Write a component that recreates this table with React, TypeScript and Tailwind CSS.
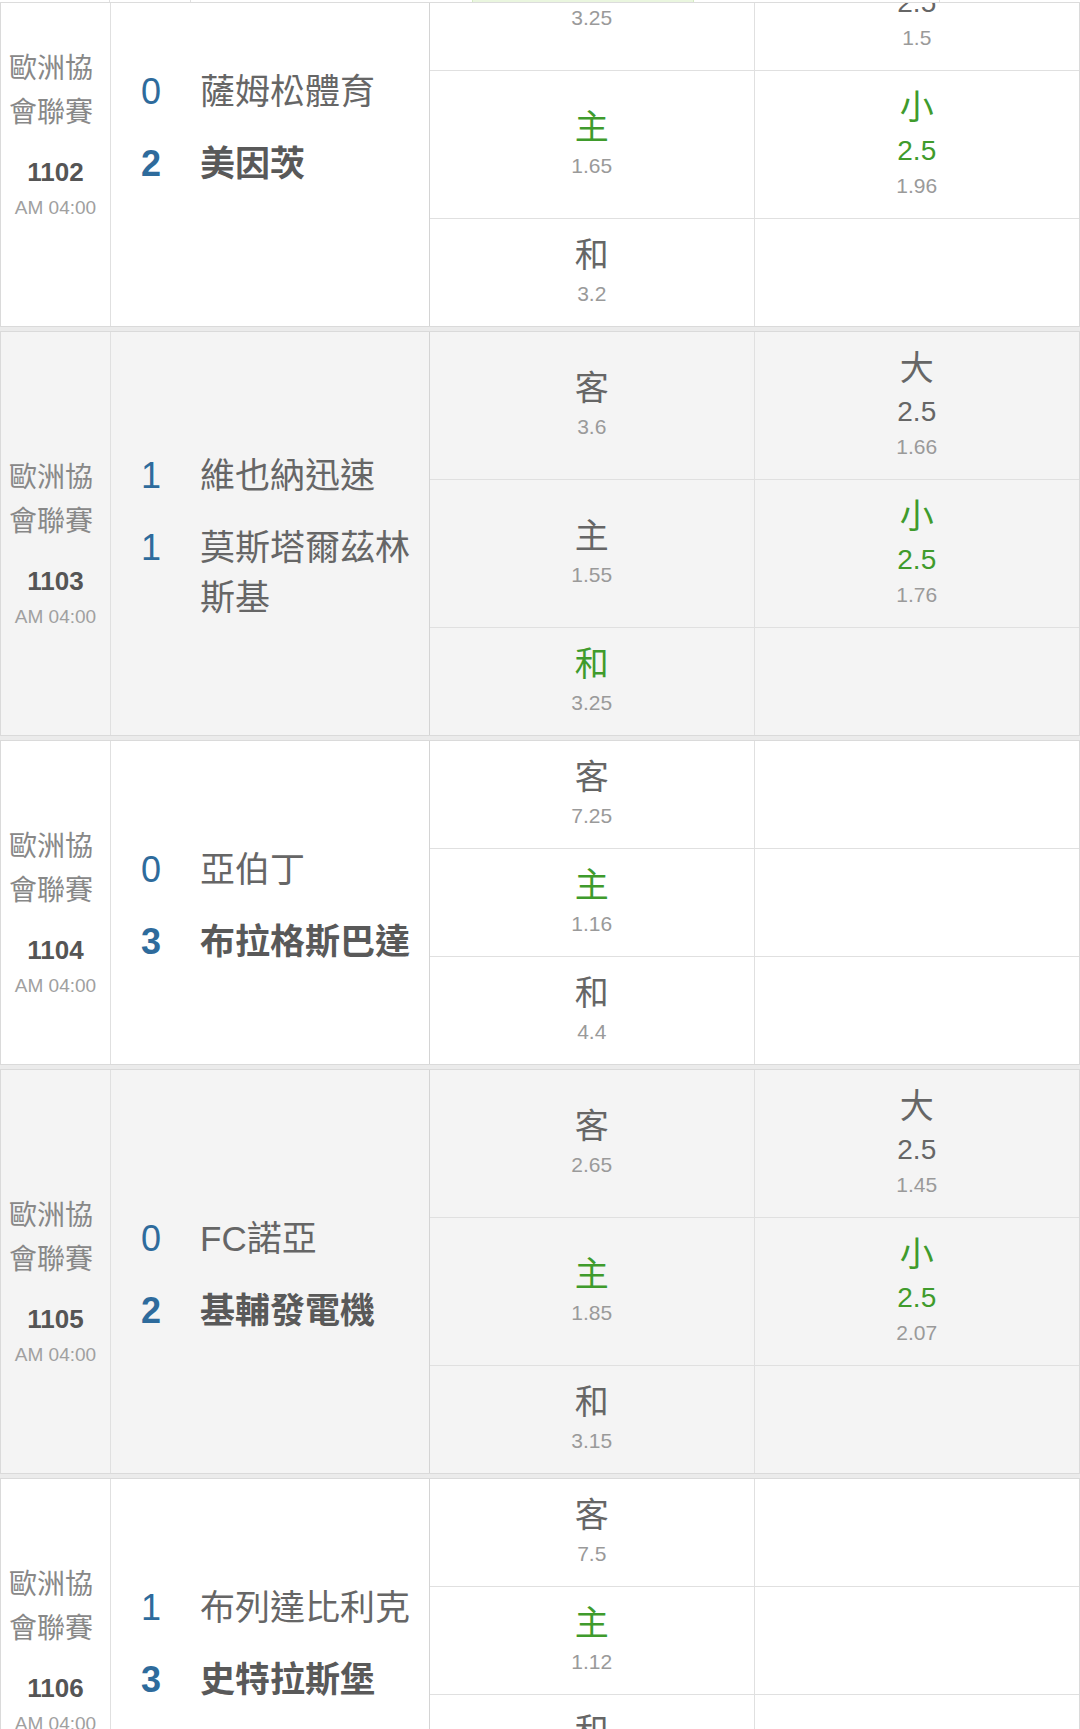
import React from 'react';

type Pick = { label: string; odds: string; win?: boolean };
type Total = { label: string; line: string; odds: string; win?: boolean } | null;
type Team = { score: number; name: string; win?: boolean };
type Match = { no: string; teams: Team[]; rows: [Pick, Total][] };

const matches: Match[] = [
  {
    no: '1102',
    teams: [
      { score: 0, name: '薩姆松體育' },
      { score: 2, name: '美因茨', win: true },
    ],
    rows: [
      [{ label: '客', odds: '3.25' }, { label: '大', line: '2.5', odds: '1.5' }],
      [{ label: '主', odds: '1.65', win: true }, { label: '小', line: '2.5', odds: '1.96', win: true }],
      [{ label: '和', odds: '3.2' }, null],
    ],
  },
  {
    no: '1103',
    teams: [
      { score: 1, name: '維也納迅速' },
      { score: 1, name: '莫斯塔爾茲林斯基' },
    ],
    rows: [
      [{ label: '客', odds: '3.6' }, { label: '大', line: '2.5', odds: '1.66' }],
      [{ label: '主', odds: '1.55' }, { label: '小', line: '2.5', odds: '1.76', win: true }],
      [{ label: '和', odds: '3.25', win: true }, null],
    ],
  },
  {
    no: '1104',
    teams: [
      { score: 0, name: '亞伯丁' },
      { score: 3, name: '布拉格斯巴達', win: true },
    ],
    rows: [
      [{ label: '客', odds: '7.25' }, null],
      [{ label: '主', odds: '1.16', win: true }, null],
      [{ label: '和', odds: '4.4' }, null],
    ],
  },
  {
    no: '1105',
    teams: [
      { score: 0, name: 'FC諾亞' },
      { score: 2, name: '基輔發電機', win: true },
    ],
    rows: [
      [{ label: '客', odds: '2.65' }, { label: '大', line: '2.5', odds: '1.45' }],
      [{ label: '主', odds: '1.85', win: true }, { label: '小', line: '2.5', odds: '2.07', win: true }],
      [{ label: '和', odds: '3.15' }, null],
    ],
  },
  {
    no: '1106',
    teams: [
      { score: 1, name: '布列達比利克' },
      { score: 3, name: '史特拉斯堡', win: true },
    ],
    rows: [
      [{ label: '客', odds: '7.5' }, null],
      [{ label: '主', odds: '1.12', win: true }, null],
      [{ label: '和', odds: '5.25' }, null],
    ],
  },
];

const font = { fontFamily: '"Liberation Sans", "Noto Sans CJK TC", sans-serif' };

function PickCell({ pick }: { pick: Pick }) {
  return (
    <div className="flex flex-col items-center justify-center pt-[12px] pb-[17px] border-r border-[#e0e0e0]">
      <div className={`text-[34px] leading-[48px] ${pick.win ? 'text-[#3f9b2c]' : 'text-[#666]'}`}>{pick.label}</div>
      <div className="text-[21px] leading-[30px] text-[#9a9a9a]">{pick.odds}</div>
    </div>
  );
}

function TotalCell({ total }: { total: Total }) {
  if (!total) return <div />;
  const color = total.win ? 'text-[#3f9b2c]' : 'text-[#666]';
  return (
    <div className="flex flex-col items-center justify-center pt-[12px] pb-[17px]">
      <div className={`text-[34px] leading-[48px] ${color}`}>{total.label}</div>
      <div className={`text-[28px] leading-[40px] ${color}`}>{total.line}</div>
      <div className="text-[21px] leading-[30px] text-[#9a9a9a]">{total.odds}</div>
    </div>
  );
}

function MatchRow({ m, shaded }: { m: Match; shaded: boolean }) {
  return (
    <div className={`flex border border-[#dadada] mb-[4px] ${shaded ? 'bg-[#f4f4f4]' : 'bg-white'}`}>
      <div className="w-[110px] shrink-0 border-r border-[#e0e0e0] flex flex-col justify-center pt-[20px]">
        <div className="pl-[8px] text-[28px] leading-[44px] text-[#888]">歐洲協會聯賽</div>
        <div className="mt-[21px] text-center text-[26px] leading-[32px] font-semibold text-[#555]">{m.no}</div>
        <div className="mt-[6px] text-center text-[19px] leading-[28px] text-[#a0a0a0]">AM 04:00</div>
      </div>
      <div className="w-[319px] shrink-0 border-r border-[#d4d4d4] flex flex-col justify-center gap-[22px] pt-[6px]">
        {m.teams.map((t, i) => (
          <div key={i} className="flex items-baseline">
            <div className={`w-[80px] shrink-0 text-center text-[36px] leading-[50px] text-[#2e6b9c] ${t.win ? 'font-semibold' : ''}`}>
              {t.score}
            </div>
            <div className={`pl-[9px] pr-[6px] text-[35px] leading-[50px] ${t.win ? 'font-semibold text-[#595959]' : 'text-[#666]'}`}>
              {t.name}
            </div>
          </div>
        ))}
      </div>
      <div className="flex-1 flex flex-col">
        {m.rows.map(([pick, total], i) => (
          <div key={i} className="grid grid-cols-2 border-b border-[#e0e0e0] last:border-b-0">
            <PickCell pick={pick} />
            <TotalCell total={total} />
          </div>
        ))}
      </div>
    </div>
  );
}

export default function App() {
  return (
    <div className="relative w-[1080px] h-[1729px] overflow-hidden bg-[#ebebeb]" style={font}>
      <div className="-mt-[78px]">
        {matches.map((m, i) => (
          <MatchRow key={m.no} m={m} shaded={i % 2 === 1} />
        ))}
      </div>
      <div className="absolute top-0 left-0 right-0 h-[3px] bg-white border-b border-[#dcdcdc] flex">
        <div className="w-[110px] border-r border-[#e0e0e0]" />
        <div className="w-[81px] border-r border-[#e0e0e0]" />
        <div className="w-[281px]" />
        <div className="w-[222px] bg-[#eaf6df] border-x border-[#d5ebc4]" />
        <div className="w-[246px] border-r border-[#e0e0e0]" />
      </div>
    </div>
  );
}
